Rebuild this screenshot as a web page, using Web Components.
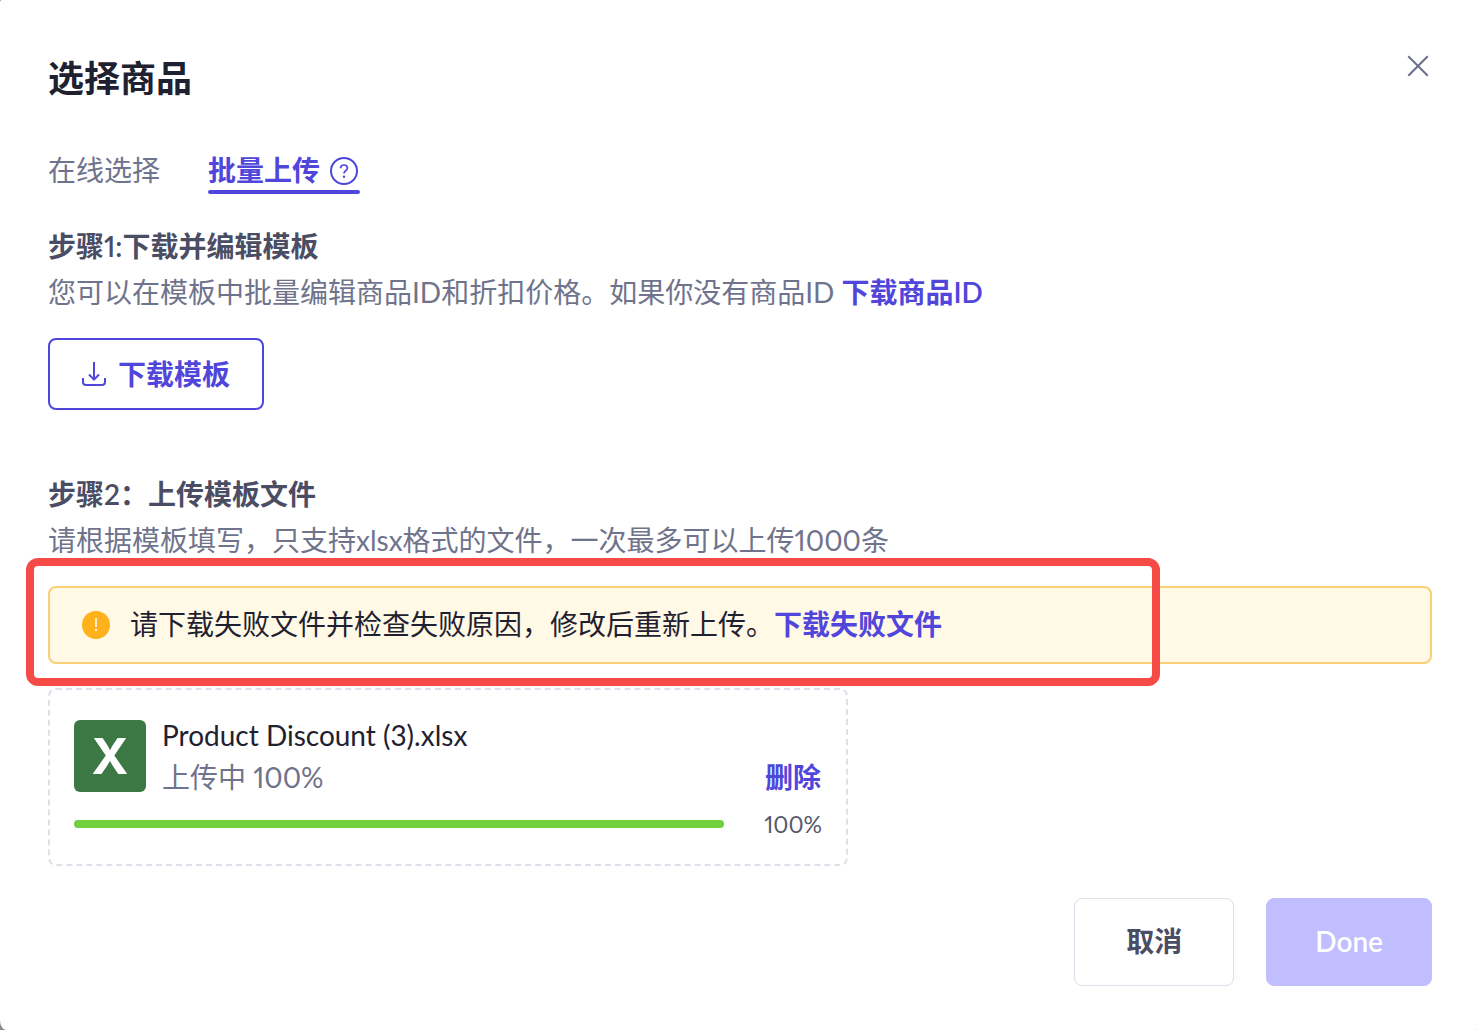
<!DOCTYPE html>
<html lang="zh-CN">
<head>
<meta charset="utf-8">
<meta name="viewport" content="width=device-width, initial-scale=1">
<title>选择商品</title>
<style>
	html {
		background: #8a8a8e;
	}

	body {
		margin: 0;
		font-family: Lato, 'Noto Sans CJK SC', sans-serif;
		font-size: 28px;
		font-variant-numeric: proportional-nums;
		line-height: 40px;
		color: #1f2130;
		--primary: #5046db;
		--heading: #4a4d63;
		--muted: #6f738b;
	}
</style>
</head>
<body>

<product-dialog heading='选择商品'>
	<upload-tabs slot='tabs'></upload-tabs>

	<upload-step heading='步骤1:下载并编辑模板'>
		您可以在模板中批量编辑商品ID和折扣价格。如果你没有商品ID
		<text-link href='#product-ids'>下载商品ID</text-link>
		<download-button slot='content'>下载模板</download-button>
	</upload-step>

	<upload-step heading='步骤2：上传模板文件'>
		请根据模板填写，只支持xlsx格式的文件，一次最多可以上传1000条
		<warning-alert slot='content'>请下载失败文件并检查失败原因，修改后重新上传。<text-link href='#failed-file'>下载失败文件</text-link></warning-alert>
		<file-card slot='content' name='Product Discount (3).xlsx' status='上传中' percent='100'></file-card>
	</upload-step>

	<action-button slot='footer'>取消</action-button>
	<action-button slot='footer' variant='primary' disabled>Done</action-button>
</product-dialog>

<script>
function makeTemplate(html) {
	const template = document.createElement('template')
	template.innerHTML = html.trim()
	return template
}

class BaseElement extends HTMLElement {
	constructor() {
		super()
		this.attachShadow({ mode: 'open' })
		this.shadowRoot.appendChild(this.constructor.template.content.cloneNode(true))
	}

	find(selector) {
		return this.shadowRoot.querySelector(selector)
	}
}

class ProductDialog extends BaseElement {
	static template = makeTemplate(`
<style>
	:host {
		display: flex;
		flex-direction: column;
		box-sizing: border-box;
		min-height: 100vh;
		padding: 54px 44px 44px 48px;
		background: #fff;
		border-radius: 2px 0 1px 6px / 2px 0 1px 10px;
	}
	:host([hidden]) {
		display: none;
	}
	header {
		display: flex;
		justify-content: space-between;
		align-items: flex-start;
		margin-bottom: 48px;
	}
	h1 {
		margin: 0;
		font-size: 36px;
		font-weight: 600;
		line-height: 48px;
	}
	button {
		display: flex;
		padding: 0;
		border: 0;
		background: none;
		color: #6b6f88;
		cursor: pointer;
	}
	main {
		display: flex;
		flex-direction: column;
		gap: 64px;
		margin-top: 32px;
	}
	footer {
		display: flex;
		justify-content: flex-end;
		gap: 32px;
		margin-top: 32px;
	}
</style>

<header>
	<h1></h1>
	<button type='button' aria-label='关闭'>
		<svg width='28' height='24' viewBox='0 0 28 24' fill='none' stroke='currentColor' stroke-width='2'>
			<path d='M5 3L23 21M23 3L5 21' stroke-linecap='square' />
		</svg>
	</button>
</header>
<slot name='tabs'></slot>
<main><slot></slot></main>
<footer><slot name='footer'></slot></footer>
`)

	connectedCallback() {
		this.find('h1').textContent = this.getAttribute('heading')
		this.find('button').addEventListener('click', () => {
			this.hidden = true
		})
	}
}

class UploadTabs extends BaseElement {
	static template = makeTemplate(`
<style>
	:host {
		display: flex;
		gap: 48px;
	}
	button {
		display: flex;
		align-items: center;
		gap: 8px;
		padding: 0 0 4px;
		border: 0;
		background: none;
		font: inherit;
		color: var(--muted);
		position: relative;
		cursor: pointer;
	}
	button[aria-selected='true'] {
		font-weight: 600;
		color: var(--primary);
	}
	button[aria-selected='true']::after {
		content: '';
		position: absolute;
		left: 0;
		right: 0;
		bottom: 0;
		height: 4px;
		border-radius: 2px;
		background: var(--primary);
	}
</style>

<button type='button' role='tab' aria-selected='false'>在线选择</button>
<button type='button' role='tab' aria-selected='true'>
	批量上传
	<svg width='32' height='32' viewBox='0 0 32 32' fill='none' stroke='currentColor' stroke-width='2'>
		<circle cx='16' cy='17' r='13' />
		<path d='M12.6 14.2C12.6 12.2 14 11 16 11C18 11 19.4 12.2 19.4 14C19.4 15.4 18.6 16.1 17.6 16.8C16.5 17.5 16 18 16 19.6' stroke-width='1.7' />
		<circle cx='16' cy='22.8' r='1.2' fill='currentColor' stroke='none' />
	</svg>
</button>
`)

	connectedCallback() {
		const tabs = this.shadowRoot.querySelectorAll('button')
		tabs.forEach((tab) => {
			tab.addEventListener('click', () => {
				tabs.forEach((other) => other.setAttribute('aria-selected', other === tab))
			})
		})
	}
}

class UploadStep extends BaseElement {
	static template = makeTemplate(`
<style>
	:host {
		display: block;
	}
	h2 {
		margin: 0;
		font-size: 28px;
		font-weight: 600;
		line-height: 40px;
		color: var(--heading);
	}
	p {
		margin: 0 0 20px;
		line-height: 52px;
		color: var(--muted);
	}
	.content {
		display: flex;
		flex-direction: column;
		align-items: flex-start;
		gap: 24px;
	}
</style>

<h2></h2>
<p><slot></slot></p>
<div class='content'><slot name='content'></slot></div>
`)

	connectedCallback() {
		this.find('h2').textContent = this.getAttribute('heading')
	}
}

class TextLink extends BaseElement {
	static template = makeTemplate(`
<style>
	:host {
		display: inline;
	}
	a {
		font-weight: 600;
		color: var(--primary);
		text-decoration: none;
	}
</style><a><slot></slot></a>
`)

	connectedCallback() {
		this.find('a').href = this.getAttribute('href')
	}
}

class DownloadButton extends BaseElement {
	static template = makeTemplate(`
<style>
	:host {
		display: block;
	}
	button {
		display: flex;
		align-items: center;
		gap: 10px;
		padding: 14px 32px 14px 30px;
		border: 2px solid var(--primary);
		border-radius: 8px;
		background: #fff;
		font: inherit;
		font-weight: 600;
		color: var(--primary);
		cursor: pointer;
	}
</style>

<button type='button'>
	<svg width='28' height='28' viewBox='0 0 28 28' fill='none' stroke='currentColor' stroke-width='2'>
		<path d='M14 2V19.5M9 14.5L14 19.6L19 14.5' />
		<path d='M3 18V22C3 24 4 25 6 25H22C24 25 25 24 25 22V18' />
	</svg>
	<span><slot></slot></span>
</button>
`)
}

class WarningAlert extends BaseElement {
	static template = makeTemplate(`
<style>
	:host {
		display: flex;
		align-items: center;
		align-self: stretch;
		gap: 20px;
		padding: 16px 32px 18px;
		border: 2px solid #f9d073;
		border-radius: 8px;
		background: #fff9e6;
		line-height: 40px;
		position: relative;
	}
	svg {
		flex: none;
	}
	.frame {
		position: absolute;
		top: -30px;
		right: 270px;
		bottom: -24px;
		left: -24px;
		border: 8px solid #f54a45;
		border-radius: 12px;
		pointer-events: none;
	}
</style>

<svg width='28' height='30' viewBox='0 0 28 30'>
	<circle cx='14' cy='16' r='14' fill='#ffb11b' />
	<path d='M14 9V18' stroke='#fff' stroke-width='1.6' />
	<circle cx='14' cy='21' r='1.1' fill='#fff' />
</svg>
<span><slot></slot></span>
<div class='frame'></div>
`)
}

class FileCard extends BaseElement {
	static template = makeTemplate(`
<style>
	:host {
		display: grid;
		grid-template-columns: 1fr auto;
		gap: 10px 40px;
		box-sizing: border-box;
		width: 100%;
		max-width: 800px;
		padding: 24px;
		border: 2px dashed #dfdfeb;
		border-radius: 8px;
		line-height: 42px;
	}
	.file {
		display: flex;
		align-items: center;
		gap: 16px;
	}
	.icon {
		width: 72px;
		border-radius: 6px;
		background: #3b7843;
		font: 700 50px/72px Inter, sans-serif;
		text-align: center;
		color: #fff;
	}
	.status {
		color: var(--muted);
	}
	button {
		align-self: end;
		padding: 0;
		border: 0;
		background: none;
		font: inherit;
		font-weight: 600;
		color: var(--primary);
		cursor: pointer;
	}
	progress {
		appearance: none;
		align-self: center;
		width: 100%;
		height: 8px;
		border: 0;
	}
	progress::-webkit-progress-bar {
		border-radius: 4px;
		background: #ececf2;
	}
	progress::-webkit-progress-value {
		border-radius: 4px;
		background: #6fcf3c;
	}
	label {
		font-size: 23px;
		line-height: 32px;
		color: #565a6e;
	}
</style>

<div class='file'>
	<div class='icon'>X</div>
	<div>
		<div class='name'></div>
		<div class='status'></div>
	</div>
</div>
<button type='button'>删除</button>
<progress id='progress' max='100'></progress>
<label for='progress'></label>
`)

	connectedCallback() {
		const percent = this.getAttribute('percent')

		this.find('.name').textContent = this.getAttribute('name')
		this.find('.status').textContent = `${this.getAttribute('status')} ${percent}%`
		this.find('progress').value = percent
		this.find('label').textContent = `${percent}%`
		this.find('button').addEventListener('click', () => this.remove())
	}
}

class ActionButton extends BaseElement {
	static template = makeTemplate(`
<style>
	:host {
		display: block;
	}
	button {
		min-width: 160px;
		padding: 22px 48px 24px;
		border: 1px solid #dcdeea;
		border-radius: 8px;
		background: #fff;
		font: inherit;
		font-weight: 600;
		color: var(--heading);
		cursor: pointer;
	}
	:host([variant='primary']) button {
		border-color: #c1beff;
		background: #c1beff;
		color: #fff;
	}
</style>

<button type='button'><slot></slot></button>
`)

	connectedCallback() {
		this.find('button').disabled = this.hasAttribute('disabled')
	}
}

customElements.define('product-dialog', ProductDialog)
customElements.define('upload-tabs', UploadTabs)
customElements.define('upload-step', UploadStep)
customElements.define('text-link', TextLink)
customElements.define('download-button', DownloadButton)
customElements.define('warning-alert', WarningAlert)
customElements.define('file-card', FileCard)
customElements.define('action-button', ActionButton)
</script>
</body>
</html>
